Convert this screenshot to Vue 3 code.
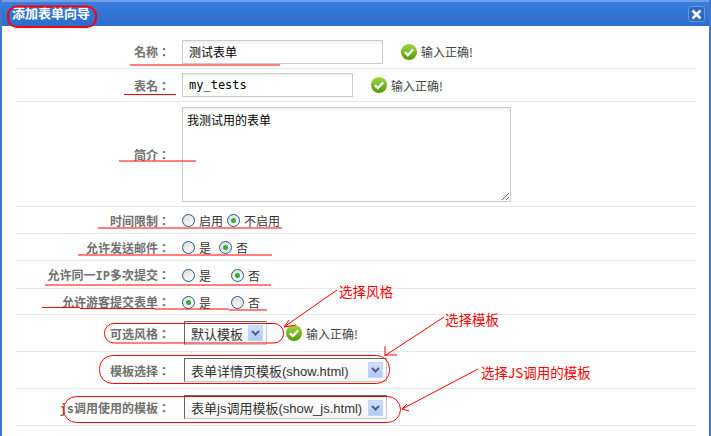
<script setup>
const radios = [
  { label: '时间限制：', opts: [{ t: '启用', w: 45 }, { t: '不启用', on: true }] },
  { label: '允许发送邮件：', opts: [{ t: '是', w: 37 }, { t: '否', on: true }] },
  { label: '允许同一IP多次提交：', opts: [{ t: '是', w: 49 }, { t: '否', on: true }] },
  { label: '允许游客提交表单：', opts: [{ t: '是', w: 49, on: true }, { t: '否' }] },
]
const selects = [
  { label: '可选风格：', text: '默认模板', cls: 'sel-s', ok: true },
  { label: '模板选择：', text: '表单详情页模板(show.html)', cls: 'sel-l' },
  { label: 'js调用使用的模板：', text: '表单js调用模板(show_js.html)', cls: 'sel-l sel-j' },
]
const lines = [
  'M130 65H280', 'M124 94.5H176', 'M119 161H196', 'M98 228H282', 'M78 255H272', 'M45 285H271',
  'M42 307.5H80', 'M80 308.5H155', 'M155 309H229', 'M229 310H267',
  'M337 290L284 327M284 327L289 320M284 327L296 325',
  'M444 317L386 355M385 346V356M385 355H397',
  'M478 369L402 409M402 409L407 404M402 409L409 411',
]
const notes = [
  { t: '选择风格', cls: 'n1' },
  { t: '选择模板', cls: 'n2' },
  { t: '选择JS调用的模板', cls: 'n3' },
]
</script>

<template>
  <div class="win">
    <header class="bar">
      <h1 class="title">添加表单向导</h1>
      <button class="close" type="button">
        <svg width="11" height="11" viewBox="0 0 11 11"><path d="M1.5 1.5L9.5 9.5M9.5 1.5L1.5 9.5" stroke="#fff" stroke-width="2.6" fill="none" /></svg>
      </button>
    </header>
    <div class="rows">
      <div class="row">
        <label class="lab">名称：</label>
        <div class="field">
          <input class="inp w1" value="测试表单" />
          <span class="ok ok1">
            <svg class="chk" width="16" height="16" viewBox="0 0 16 16"><defs><linearGradient id="g" x1="0" y1="0" x2="0" y2="1"><stop offset="0" stop-color="#9fd93c" /><stop offset="1" stop-color="#4f9a08" /></linearGradient></defs><circle cx="8" cy="8" r="8" fill="url(#g)" /><path d="M3.8 8.2L6.8 11L12.2 5.4" stroke="#fff" stroke-width="2.4" fill="none" /></svg>
            输入正确!
          </span>
        </div>
      </div>
      <div class="row">
        <label class="lab">表名：</label>
        <div class="field">
          <input class="inp w2 mono" value="my_tests" />
          <span class="ok ok1">
            <svg class="chk" width="16" height="16" viewBox="0 0 16 16"><circle cx="8" cy="8" r="8" fill="url(#g)" /><path d="M3.8 8.2L6.8 11L12.2 5.4" stroke="#fff" stroke-width="2.4" fill="none" /></svg>
            输入正确!
          </span>
        </div>
      </div>
      <div class="row">
        <label class="lab">简介：</label>
        <div class="field"><textarea class="area">我测试用的表单</textarea></div>
      </div>
      <div v-for="r in radios" :key="r.label" class="row">
        <label class="lab">{{ r.label }}</label>
        <div class="field radios">
          <span v-for="o in r.opts" :key="o.t" class="opt" :style="o.w ? { width: o.w + 'px' } : null">
            <i class="radio" :class="{ on: o.on }"></i>{{ o.t }}
          </span>
        </div>
      </div>
      <div v-for="s in selects" :key="s.label" class="row">
        <label class="lab">{{ s.label }}</label>
        <div class="field sel-field">
          <div class="sel" :class="s.cls">
            <span class="sel-text">{{ s.text }}</span>
            <span class="drop">
              <svg width="9" height="6" viewBox="0 0 9 6"><path d="M1 1L4.5 4.5L8 1" stroke="#4d5f86" stroke-width="2" fill="none" /></svg>
            </span>
          </div>
          <span v-if="s.ok" class="ok ok2">
            <svg class="chk" width="16" height="16" viewBox="0 0 16 16"><circle cx="8" cy="8" r="8" fill="url(#g)" /><path d="M3.8 8.2L6.8 11L12.2 5.4" stroke="#fff" stroke-width="2.4" fill="none" /></svg>
            输入正确!
          </span>
        </div>
      </div>
    </div>

    <svg class="marks" width="711" height="436" viewBox="0 0 711 436">
      <rect x="8" y="6.5" width="88" height="20.5" rx="9" fill="none" stroke="#f00" stroke-width="2" />
      <rect x="104.5" y="323.5" width="179" height="19.5" rx="9.5" fill="none" stroke="#f00" />
      <rect x="99.5" y="355.5" width="290" height="28" rx="13" fill="none" stroke="#f00" />
      <rect x="63.5" y="396.5" width="337" height="26" rx="13" fill="none" stroke="#f00" />
      <path v-for="d in lines" :key="d" :d="d" fill="none" stroke="#f00" />
    </svg>
    <span v-for="n in notes" :key="n.t" class="note" :class="n.cls">{{ n.t }}</span>
  </div>
</template>

<style>
html, body { margin: 0; background: #fff; }
</style>

<style scoped>
.win {
  position: relative;
  width: 711px;
  height: 436px;
  box-sizing: border-box;
  overflow: hidden;
  background: #fff;
  border-left: 2px solid #3f78cc;
  border-right: 2px solid #3f78cc;
  font: 12px "Noto Sans CJK SC", "Liberation Sans", sans-serif;
  color: #444;
}
.bar {
  height: 26px;
  box-sizing: border-box;
  border-top: 2px solid #6f9fe6;
  background: linear-gradient(#3a7ddd, #2c6ccd);
  display: flex;
  align-items: center;
  justify-content: space-between;
  padding: 0 4px 0 10px;
}
.title {
  margin: 0;
  font: bold 13px "Noto Sans CJK SC", sans-serif;
  color: #fff;
  position: relative;
  top: -2px;
}
.close {
  width: 17px;
  height: 16px;
  padding: 0;
  border: 1px solid #6b96dc;
  border-radius: 3px;
  background: #2f68c4;
  display: flex;
  align-items: center;
  justify-content: center;
}
.rows {
  margin: 9px 13px 0 14px;
  display: grid;
  grid-template-rows: 34px 33px 105px 27px 27px 28px 26px 37px 37px 37px;
}
.row {
  display: grid;
  grid-template-columns: 154px 1fr;
  column-gap: 12px;
  align-items: center;
  border-bottom: 1px solid #e8e8e8;
  box-sizing: border-box;
}
.lab {
  text-align: right;
  font: bold 12px "DejaVu Sans Mono", "Noto Sans CJK TC", sans-serif;
  color: #707070;
  white-space: nowrap;
}
.field { display: flex; align-items: center; min-width: 0; }
.inp, .area {
  box-sizing: border-box;
  border: 1px solid #ccc;
  background: linear-gradient(#efefef, #fff 4px);
  color: #000;
  padding: 0 6px;
  font: 12px "Noto Sans CJK SC", sans-serif;
}
.inp { height: 24px; }
.w1 { width: 201px; }
.w2 { width: 171px; }
.mono { font-family: "DejaVu Sans Mono", monospace; }
.area {
  width: 329px;
  height: 95px;
  padding: 4px;
  line-height: 16px;
}
.ok { display: inline-flex; align-items: center; gap: 4px; color: #444; }
.ok1 { margin-left: 18px; }
.ok2 { margin-left: 19px; }
.radios { padding-top: 1px; }
.opt { display: inline-flex; align-items: center; gap: 4px; color: #333; white-space: nowrap; }
.radio {
  width: 13px;
  height: 13px;
  box-sizing: border-box;
  border: 1px solid #1e5a8c;
  border-radius: 50%;
  background: linear-gradient(135deg, #dcdcd6, #fff);
  display: inline-block;
  position: relative;
}
.radio.on::after {
  content: "";
  position: absolute;
  left: 3px;
  top: 3px;
  width: 5px;
  height: 5px;
  border-radius: 50%;
  background: #2dae3a;
}
.sel-field { padding-left: 2px; }
.sel {
  height: 24px;
  box-sizing: border-box;
  display: flex;
  align-items: center;
  justify-content: space-between;
  border: 1px solid #c8c8c8;
  border-top-color: #666;
  border-left-color: #666;
  background: linear-gradient(#fff, #f6f6f6);
  padding: 0 3px 0 6px;
  color: #333;
  font: 13px "Liberation Sans", "Noto Sans CJK SC", sans-serif;
  white-space: nowrap;
}
.sel-s { width: 83px; }
.sel-l { width: 203px; }
.sel-j { border-top-width: 2px; }
.drop {
  width: 15px;
  height: 16px;
  display: flex;
  align-items: center;
  justify-content: center;
  background: linear-gradient(#d3e0fb, #aec8f6);
  border: 1px solid #c4d5f6;
  box-sizing: border-box;
  flex: none;
}
.marks { position: absolute; left: -2px; top: 0; pointer-events: none; }
.note {
  position: absolute;
  color: #f00;
  font: 13.5px "Noto Sans CJK SC", sans-serif;
  white-space: nowrap;
}
.n1 { left: 337px; top: 281px; }
.n2 { left: 443px; top: 309px; }
.n3 { left: 479px; top: 362px; }
</style>
